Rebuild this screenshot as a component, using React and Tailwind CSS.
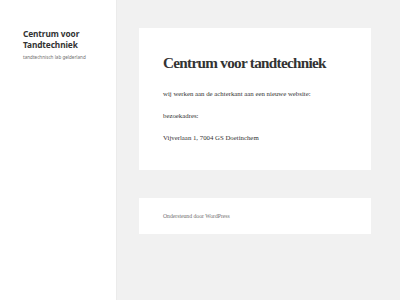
export default function App() {
  return (
    <div className="flex w-[400px] h-[300px] bg-[#f1f1f1] overflow-hidden">
      <aside className="w-[116px] shrink-0 bg-white pl-[23px] pt-[28px] shadow-[0_0_1px_rgba(0,0,0,0.15)]">
        <h1 className="font-['Noto_Sans',sans-serif] font-bold text-[8.3px] leading-[11px] tracking-[-0.1px] text-[#333]">
          Centrum voor Tandtechniek
        </h1>
        <p className="mt-[4px] font-['Noto_Sans',sans-serif] text-[4.6px] leading-[7px] text-[#707070]">
          tandtechnisch lab gelderland
        </p>
      </aside>

      <main className="flex-1 pl-[23px] pr-[29px] pt-[28px] font-['Liberation_Serif',serif]">
        <article className="bg-white h-[142px] pl-[24px] pt-[25px]">
          <h2 className="font-bold text-[15.2px] leading-[20px] tracking-[-0.7px] text-[#333]">
            Centrum voor tandtechniek
          </h2>
          <div className="mt-[16px] text-[6.8px] leading-[9px] text-[#333] flex flex-col gap-[13px]">
            <p>wij werken aan de achterkant aan een nieuwe website:</p>
            <p>bezoekadres:</p>
            <p>Vijverlaan 1, 7004 GS Doetinchem</p>
          </div>
        </article>

        <footer className="mt-[28px] bg-white h-[36px] pl-[24px] flex items-center">
          <p className="text-[5.7px] text-[#707070]">Ondersteund door WordPress</p>
        </footer>
      </main>
    </div>
  );
}
